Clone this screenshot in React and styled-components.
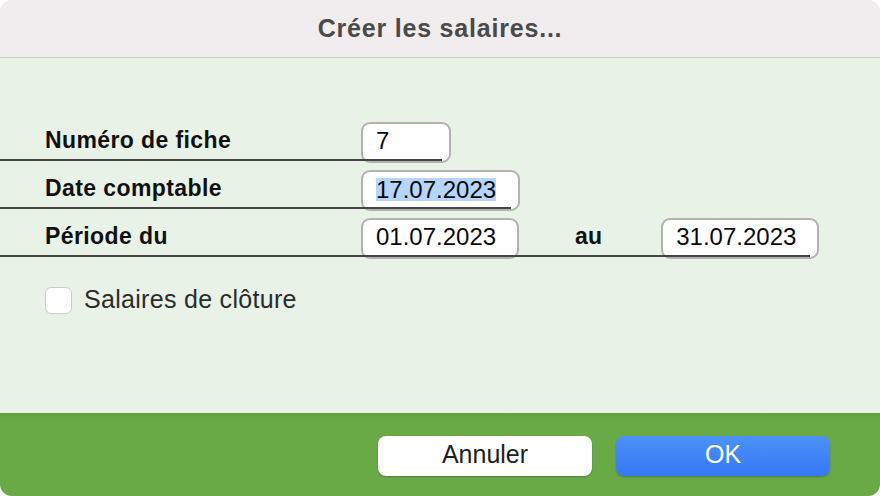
import React from "react";
import styled, { createGlobalStyle } from "styled-components";

const GlobalStyle = createGlobalStyle`
  html, body {
    margin: 0;
    padding: 0;
    background: #ffffff;
  }
  body {
    font-family: "Liberation Sans", Arial, sans-serif;
  }
`;

function App() {
  return (
    <Window>
      <GlobalStyle />
      <TitleBar>Créer les salaires...</TitleBar>
      <Body>
        <Row>
          <Label>Numéro de fiche</Label>
          <Field width={90}>7</Field>
        </Row>
        <Row>
          <Label>Date comptable</Label>
          <Field width={159}>
            <Selected>17.07.2023</Selected>
          </Field>
        </Row>
        <Row>
          <Label>Période du</Label>
          <Field width={158}>01.07.2023</Field>
          <Between>au</Between>
          <Field width={158}>31.07.2023</Field>
        </Row>
        <CheckRow>
          <Box />
          <CheckLabel>Salaires de clôture</CheckLabel>
        </CheckRow>
      </Body>
      <Footer>
        <Button>Annuler</Button>
        <Button primary>OK</Button>
      </Footer>
    </Window>
  );
}

export default App;

const Window = styled.div`
  width: 880px;
  height: 496px;
  border-radius: 12px;
  overflow: hidden;
  display: flex;
  flex-direction: column;
  background: #e8f2e7;
`;

const TitleBar = styled.div`
  height: 56px;
  flex-shrink: 0;
  display: flex;
  align-items: center;
  justify-content: center;
  background: #f1eced;
  border-bottom: 1px solid #c6d0c4;
  color: #4a4a4a;
  font-size: 25px;
  font-weight: bold;
  letter-spacing: 0.8px;
  padding-bottom: 1px;
`;

const Body = styled.div`
  flex: 1;
  padding-top: 64px;
  display: flex;
  flex-direction: column;
`;

const Row = styled.div`
  position: relative;
  display: flex;
  align-items: center;
  width: fit-content;
  height: 41px;
  margin-bottom: 7px;
  padding-left: 45px;

  &::after {
    content: "";
    position: absolute;
    left: 0;
    right: 9px;
    bottom: 2px;
    height: 2px;
    background: #444444;
    z-index: 1;
  }
`;

const Label = styled.div`
  width: 316px;
  font-size: 23px;
  font-weight: bold;
  letter-spacing: 0.4px;
  color: #111111;
  margin-top: -4px;
`;

const Between = styled(Label)`
  width: auto;
  margin: -4px 59px 0 56px;
  letter-spacing: 0.2px;
`;

const Field = styled.div`
  box-sizing: border-box;
  width: ${(p) => p.width}px;
  height: 41px;
  flex-shrink: 0;
  display: flex;
  align-items: center;
  padding: 0 0 3px 13px;
  background: #ffffff;
  border: 2px solid #b2b2b2;
  border-radius: 9px;
  font-size: 24px;
  color: #0a0a0a;
`;

const Selected = styled.span`
  background: #b5d5fb;
  line-height: 23px;
`;

const CheckRow = styled.div`
  display: flex;
  align-items: center;
  gap: 12px;
  padding-left: 45px;
  margin-top: 21px;
`;

const Box = styled.div`
  box-sizing: border-box;
  width: 27px;
  height: 27px;
  background: #ffffff;
  border: 1px solid #cbcbcb;
  border-radius: 6px;
`;

const CheckLabel = styled.div`
  font-size: 25px;
  letter-spacing: 0.3px;
  color: #2b2b2b;
  margin-top: -2px;
`;

const Footer = styled.div`
  height: 83px;
  flex-shrink: 0;
  box-sizing: border-box;
  display: flex;
  justify-content: flex-end;
  align-items: flex-start;
  gap: 24px;
  padding: 23px 50px 0 0;
  background: linear-gradient(#63a040, #6aaa46 10px, #6aaa46);
`;

const Button = styled.div`
  box-sizing: border-box;
  width: 214px;
  height: 40px;
  padding-bottom: 4px;
  display: flex;
  align-items: center;
  justify-content: center;
  border-radius: 8px;
  font-size: 25px;
  color: ${(p) => (p.primary ? "#ffffff" : "#1e1e1e")};
  background: ${(p) =>
    p.primary ? "linear-gradient(#4b92f8, #3478f6)" : "#ffffff"};
  box-shadow: 0 1px 2px rgba(0, 0, 0, 0.25);
`;
